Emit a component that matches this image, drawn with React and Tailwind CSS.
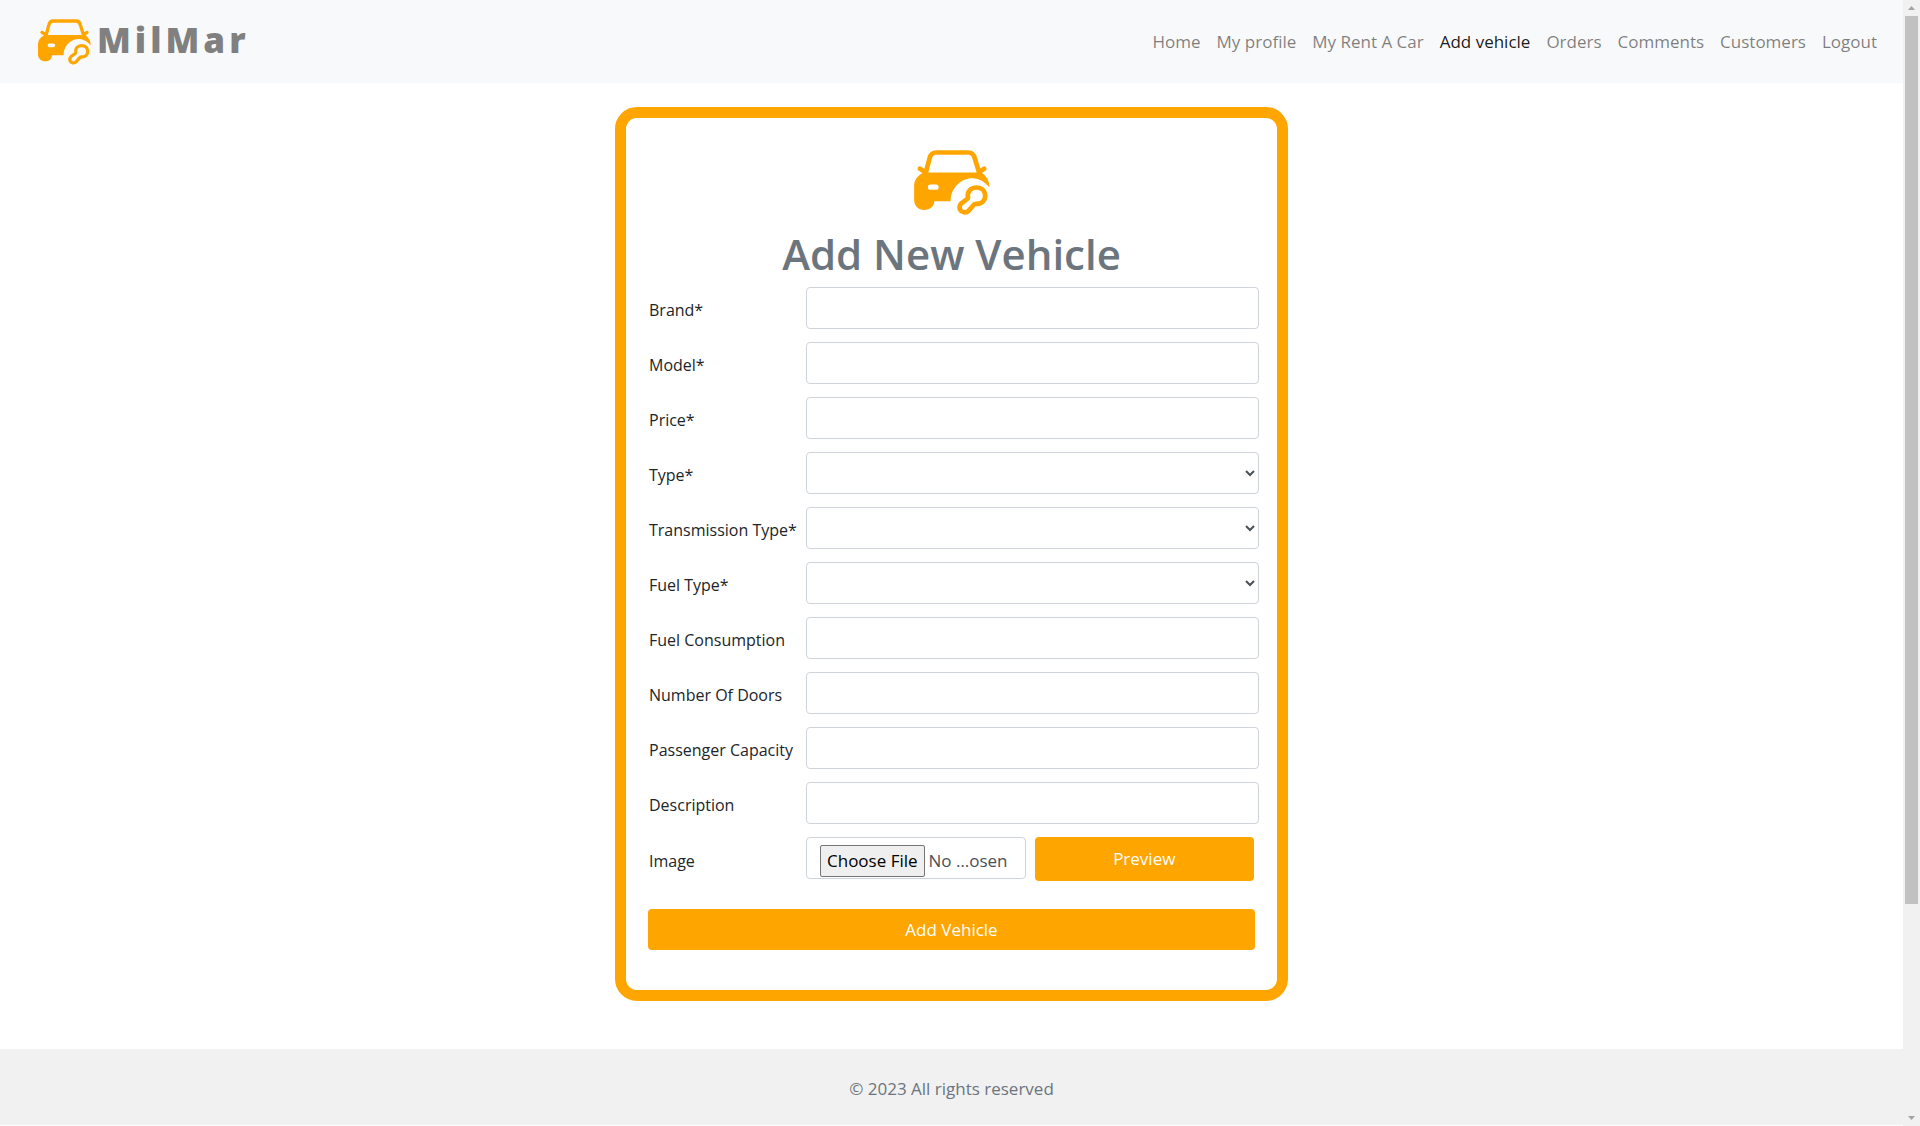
import React from "react";

const links = ["Home", "My profile", "My Rent A Car", "Add vehicle", "Orders", "Comments", "Customers", "Logout"];

const fields = [
  { id: "brand", label: "Brand*" },
  { id: "model", label: "Model*" },
  { id: "price", label: "Price*" },
  { id: "type", label: "Type*", select: true },
  { id: "transmission", label: "Transmission Type*", select: true },
  { id: "fuel", label: "Fuel Type*", select: true },
  { id: "consumption", label: "Fuel Consumption" },
  { id: "doors", label: "Number Of Doors" },
  { id: "capacity", label: "Passenger Capacity" },
  { id: "description", label: "Description" },
];

const control = "h-[42px] w-full rounded border border-[#ced4da] bg-white text-[#495057]";

function CarLogo({ className }) {
  return (
    <svg viewBox="102 59 226 194" className={className} aria-hidden="true">
      <g fill="none" stroke="#ffa500" strokeLinecap="round">
        <path d="M136 130 L148 84 Q152 66.5 168 66.5 H264 Q279 66.5 283 84 L297 130" strokeWidth="14" />
        <path d="M119 115 L134 124 M311 115 L297 124" strokeWidth="14" />
      </g>
      <path
        fill="#ffa500"
        fillRule="evenodd"
        d="M130 126 H303 Q327 142 327 171 C310 150 292 143 272 143 C240 145 210 174 211 212 H162 C162 228 149 238 132 238 C115 238 102 226 102 208 V165 Q102 140 130 126 Z M151 162 A8 8 0 0 0 151 178 H167 A8 8 0 0 0 167 162 Z"
      />
      <path
        fill="none"
        stroke="#ffa500"
        strokeWidth="14"
        strokeLinejoin="round"
        d="M263 200 C259 184 271 171 288 171 C304 171 314 182 314 196 C314 210 303 220 286 220 Q281 220 277 226 L265 240 C257 249 243 245 239 237 C236 229 238 223 243 218 L259 206 Q263 204 263 200 Z"
      />
    </svg>
  );
}

function Field({ id, label, select }) {
  return (
    <div className="grid grid-cols-[157px_1fr] items-center">
      <label htmlFor={id} className="pt-1 text-base leading-[26px] whitespace-nowrap">{label}</label>
      {select ? (
        <select id={id} className={control} defaultValue="">
          <option value=""></option>
        </select>
      ) : (
        <input id={id} type="text" className={control + " px-3"} />
      )}
    </div>
  );
}

function ScrollTrack() {
  return (
    <div className="flex w-[17px] shrink-0 flex-col items-center justify-between bg-[#f1f1f1]" aria-hidden="true">
      <div className="flex w-full flex-1 flex-col items-center">
        <svg className="h-4 w-[17px]" viewBox="0 0 17 16"><path d="M5 10h7L8.500 6z" fill="#a3a3a3" /></svg>
        <div className="h-[80%] w-[13px] bg-[#c1c1c1]" />
      </div>
      <svg className="h-4 w-[17px]" viewBox="0 0 17 16"><path d="M5 6h7L8.500 10z" fill="#a3a3a3" /></svg>
    </div>
  );
}

export default function App() {
  return (
    <div className="flex min-h-screen bg-white font-['Open_Sans',sans-serif] text-[17px] leading-[26px] text-[#212529]">
      <div className="flex min-w-0 flex-1 flex-col">
        <header className="flex h-[83px] items-center justify-between bg-[#f8f9fa] pr-[26px] pl-[38px]">
          <a href="#home" className="flex items-center gap-1.5">
            <CarLogo className="h-[46px] w-[53px]" />
            <span className="pb-1 text-[35px] leading-[48px] font-extrabold tracking-[4px] text-[#808080]">MilMar</span>
          </a>
          <nav className="flex gap-4">
            {links.map((name) => (
              <a key={name} href="#nav" className={name === "Add vehicle" ? "text-black/90" : "text-black/50"}>
                {name}
              </a>
            ))}
          </nav>
        </header>

        <main className="flex flex-1 justify-center pt-6 pb-12">
          <form className="flex w-[673px] flex-col rounded-[22px] border-[11px] border-[#ffa500] pt-8 pr-[18px] pb-10 pl-[22px]">
            <CarLogo className="mr-1 h-[65px] w-[76px] self-center" />
            <h1 className="mt-2.5 mr-1 mb-1 text-center text-[42px] leading-[58px] font-semibold text-[#6c757d]">Add New Vehicle</h1>
            <div className="flex flex-col gap-[13px] pl-px">
              {fields.map((field) => (
                <Field key={field.id} {...field} />
              ))}
              <div className="grid grid-cols-[157px_1fr] items-center">
                <label htmlFor="image" className="pt-1 text-base leading-[26px]">Image</label>
                <div className="mr-[5px] grid grid-cols-2 items-start gap-[9px]">
                  <input
                    id="image"
                    type="file"
                    className="h-[42px] w-full rounded border border-[#ced4da] bg-white px-[13px] pt-[7px] text-[#495057] file:mr-1 file:h-8 file:rounded-[2px] file:border file:border-solid file:border-[#767676] file:bg-[#efefef] file:px-1.5 file:text-black"
                  />
                  <button type="button" className="h-11 rounded bg-[#ffa500] text-white">Preview</button>
                </div>
              </div>
            </div>
            <button type="submit" className="mt-7 mr-1 h-[41px] rounded bg-[#ffa500] text-white">Add Vehicle</button>
          </form>
        </main>

        <footer className="mb-px flex h-[76px] items-center justify-center bg-[#f1f1f1] pt-1 text-[#6c757d]">
          © 2023 All rights reserved
        </footer>
      </div>
      <ScrollTrack />
    </div>
  );
}
